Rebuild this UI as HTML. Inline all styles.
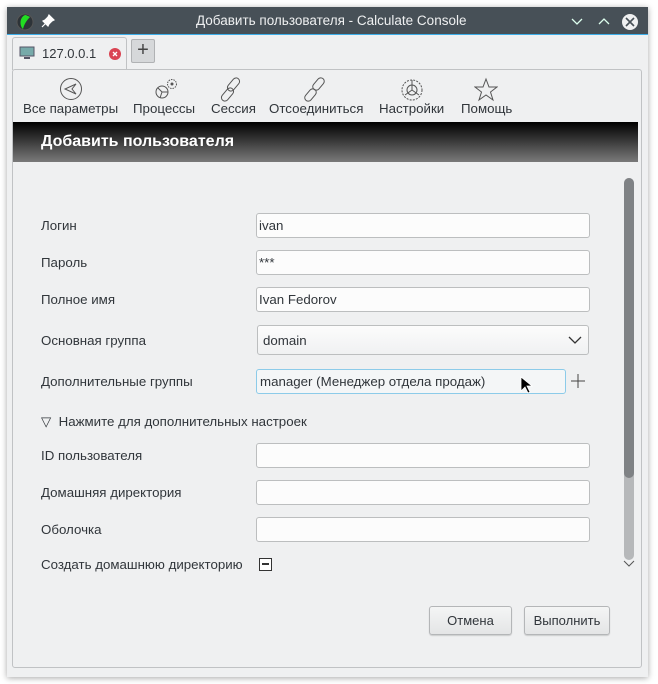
<!DOCTYPE html>
<html><head><meta charset="utf-8"><style>
*{box-sizing:border-box;margin:0;padding:0}
body{width:658px;height:684px;background:#fff;font-family:"Liberation Sans","DejaVu Sans",sans-serif;font-size:13px;color:#31363b;position:relative;overflow:hidden}
.win{position:absolute;left:7px;top:7px;width:641px;height:670px;background:#eff0f1;box-shadow:0 1px 6px rgba(0,0,0,.35)}
.tb{position:absolute;left:0;top:0;width:641px;height:28px;background:#475057;border-bottom:1px solid #3daee9;color:#eef;font-size:13.5px}
.abs{position:absolute}
.tab{position:absolute;left:5px;top:30px;width:115px;height:33px;background:#eff0f1;border:1px solid #c0c2c4;border-bottom:none;border-radius:3px 3px 0 0}
.frame{position:absolute;left:5px;top:62px;width:630px;height:599px;border:1px solid #c0c2c4;border-radius:3px}
.tool{position:absolute;top:94px;font-size:13.3px;color:#31363b}
.hdr{position:absolute;left:6px;top:115px;width:625px;height:40px;background:linear-gradient(#000,#7a7a7a);color:#fff;font-weight:bold;font-size:16px;padding:11px 0 0 28px}
.lbl{position:absolute;left:34px;font-size:13.3px}
.inp{position:absolute;left:249px;width:334px;height:25px;background:#fcfcfc;border:1px solid #bcbebf;border-radius:3px;padding:4px 0 0 2px;font-size:13.3px}
.btn{position:absolute;top:599px;height:29px;background:linear-gradient(#f4f5f5,#e4e5e6);border:1px solid #b4b6b8;border-radius:3px;text-align:center;padding-top:6px;box-shadow:0 1px 1px rgba(0,0,0,.15)}
</style></head><body>
<div class="win">
<div class="tb">
 <svg class="abs" style="left:9px;top:6px" width="18" height="18"><circle cx="9" cy="9" r="8" fill="#2d3338" stroke="#555"/><path d="M9 2 C4 4 3 12 7 16 C8 12 10 8 14 4 C12 3 10 2 9 2Z" fill="#22dd22"/></svg>
 <svg class="abs" style="left:34px;top:7px" width="14" height="14"><path d="M8 1l5 5-2 1-3 3-1 2-5-5 2-1 3-3zM5 9l-4 4" stroke="#fff" fill="#fff" stroke-width="1.2"/></svg>
 <div class="abs" style="left:189px;top:6px;color:#eff0f1">Добавить пользователя - Calculate Console</div>
 <svg class="abs" style="left:562px;top:7px" width="70" height="16"><path d="M3 5l5 5 5-5M30 10l5-5 5 5" stroke="#dfe" fill="none" stroke-width="1.3"/><circle cx="61" cy="8" r="8" fill="#eff0f1"/><path d="M57 4l8 8M65 4l-8 8" stroke="#475057" stroke-width="1.6"/></svg>
</div>
<div class="tab">
 <svg class="abs" style="left:6px;top:8px" width="16" height="14"><rect x="1" y="1" width="14" height="9" fill="#7aa" stroke="#556"/><rect x="5" y="11" width="6" height="2" fill="#556"/></svg>
 <div class="abs" style="left:29px;top:8px">127.0.0.1</div>
 <svg class="abs" style="left:96px;top:10px" width="12" height="12"><circle cx="6" cy="6" r="6" fill="#da4453"/><path d="M4 4l4 4M8 4l-4 4" stroke="#fff" stroke-width="1.3"/></svg>
</div>
<div class="abs" style="left:124px;top:32px;width:24px;height:24px;background:#d6d8da;border:1px solid #b0b2b4;border-radius:2px;text-align:center;font-size:20px;line-height:21px;color:#444">+</div>
<div class="frame"></div>
<svg class="abs" style="left:52px;top:70px" width="24" height="24"><circle cx="12" cy="12" r="10.5" fill="none" stroke="#555"/><path d="M17 7L6 12l11 5-4-5z" fill="none" stroke="#555"/></svg>
<svg class="abs" style="left:146px;top:70px" width="26" height="24"><circle cx="9" cy="15" r="6" fill="none" stroke="#555"/><path d="M9 15l-4-4M9 15l6 0M9 15l-2 6" stroke="#555"/><circle cx="19" cy="7" r="4.5" fill="none" stroke="#555" stroke-dasharray="1.5 1"/><circle cx="19" cy="7" r="1.5" fill="#555"/></svg>
<svg class="abs" style="left:212px;top:70px" width="24" height="26"><rect x="11" y="0" width="7" height="15" rx="3.5" transform="rotate(40 14.5 7.5)" fill="none" stroke="#555"/><rect x="5" y="10" width="7" height="15" rx="3.5" transform="rotate(40 8.5 17.5)" fill="none" stroke="#555"/></svg>
<svg class="abs" style="left:296px;top:70px" width="24" height="26"><rect x="12" y="0" width="7" height="14" rx="3.5" transform="rotate(40 15.5 7)" fill="none" stroke="#555"/><rect x="4" y="11" width="7" height="14" rx="3.5" transform="rotate(40 7.5 18)" fill="none" stroke="#555"/></svg>
<svg class="abs" style="left:393px;top:70px" width="24" height="26"><circle cx="12" cy="13" r="10" fill="none" stroke="#555" stroke-dasharray="2 1.2"/><circle cx="12" cy="13" r="5" fill="none" stroke="#555"/><path d="M12 3v10l-7 5M12 13l7 5" stroke="#555" fill="none"/></svg>
<svg class="abs" style="left:467px;top:70px" width="24" height="26"><path d="M12 2l3 8h8l-6.5 5 2.5 8-7-5-7 5 2.5-8L1 10h8z" fill="none" stroke="#555"/></svg>
<div class="tool" style="left:16px">Все параметры</div>
<div class="tool" style="left:126px">Процессы</div>
<div class="tool" style="left:204px">Сессия</div>
<div class="tool" style="left:262px">Отсоединиться</div>
<div class="tool" style="left:372px">Настройки</div>
<div class="tool" style="left:454px">Помощь</div>
<div class="hdr">Добавить пользователя</div>
<div class="lbl" style="top:211px">Логин</div>
<div class="lbl" style="top:248px">Пароль</div>
<div class="lbl" style="top:285px">Полное имя</div>
<div class="lbl" style="top:326px">Основная группа</div>
<div class="lbl" style="top:367px">Дополнительные группы</div>
<div class="lbl" style="top:407px">▽&nbsp; Нажмите для дополнительных настроек</div>
<div class="lbl" style="top:441px">ID пользователя</div>
<div class="lbl" style="top:478px">Домашняя директория</div>
<div class="lbl" style="top:515px">Оболочка</div>
<div class="lbl" style="top:550px">Создать домашнюю директорию</div>
<div class="inp" style="top:206px">ivan</div>
<div class="inp" style="top:243px">***</div>
<div class="inp" style="top:280px">Ivan Fedorov</div>
<div class="inp" style="top:318px;left:250px;width:332px;height:30px;padding:7px 0 0 5px;background:linear-gradient(#fcfcfc,#f0f1f2)">domain<svg class="abs" style="left:310px;top:10px" width="14" height="9"><path d="M1 1l6 6 6-6" stroke="#333" fill="none" stroke-width="1.3"/></svg></div>
<div class="inp" style="top:362px;width:310px;border-color:#8ccbe9;background:#f4f6f7;padding-left:3px">manager (Менеджер отдела продаж)</div>
<svg class="abs" style="left:513px;top:369px" width="14" height="20"><path d="M1 1v14l4-4 3 6 2-1-3-6h5z" fill="#000" stroke="#fff" stroke-width=".8"/></svg>
<svg class="abs" style="left:563px;top:366px" width="16" height="16"><path d="M8 1v14M1 8h14" stroke="#444"/></svg>
<div class="inp" style="top:436px"></div>
<div class="inp" style="top:473px"></div>
<div class="inp" style="top:510px"></div>
<div class="abs" style="left:252px;top:551px;width:13px;height:13px;border:1.5px solid #333;background:#fff"><div style="margin:4px 2px;height:2px;background:#333"></div></div>
<div class="abs" style="left:617px;top:171px;width:10px;height:382px;background:#b6b8ba;border-radius:5px"></div>
<div class="abs" style="left:617px;top:171px;width:10px;height:300px;background:#7f8285;border-radius:5px"></div>
<svg class="abs" style="left:616px;top:553px" width="12" height="8"><path d="M1 1l5 5 5-5" stroke="#555" fill="none"/></svg>
<div class="btn" style="left:422px;width:83px">Отмена</div>
<div class="btn" style="left:517px;width:86px">Выполнить</div>
</div>
</body></html>
